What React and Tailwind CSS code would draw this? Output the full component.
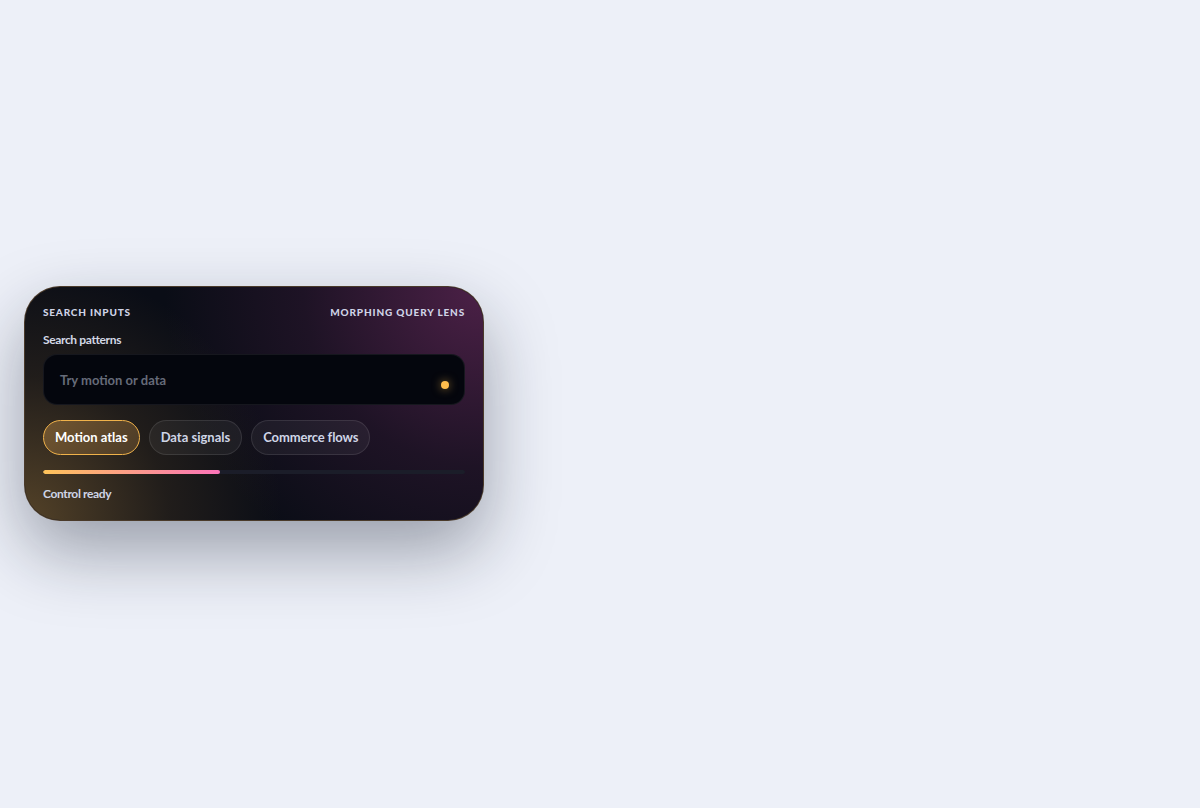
export default function App() {
  return (
    <div
      className="min-h-[808px] w-full bg-[#edf0f8] pt-[286px] pl-[24px]"
      style={{ fontFamily: "Lato, 'Noto Sans', sans-serif" }}
    >
      <div className="relative w-[460px] h-[235px] rounded-[36px] border border-[#5a4630]/80 overflow-hidden shadow-[0_30px_70px_rgba(15,23,42,0.38)] bg-[#0a0d16]">
        <div className="absolute inset-0 bg-[radial-gradient(circle_at_100%_0%,rgba(88,36,80,0.85),rgba(60,28,60,0.4)_35%,transparent_62%)]" />
        <div className="absolute inset-0 bg-[radial-gradient(circle_at_0%_100%,rgba(92,72,42,0.9),rgba(60,48,32,0.45)_28%,transparent_50%)]" />
        <div className="relative flex flex-col px-[18px] pt-[18px]">
          <div className="flex items-center justify-between h-[14px]">
            <span className="text-[10px] font-black tracking-[0.08em] text-[#cfd3e6]">SEARCH INPUTS</span>
            <span className="text-[10px] font-black tracking-[0.085em] text-[#cfd3e6]">MORPHING QUERY LENS</span>
          </div>
          <div className="mt-[13px] h-[16px] text-[12px] font-bold tracking-[-0.03em] text-[#d3d8e6] leading-[16px]">Search patterns</div>
          <div className="mt-[6px] h-[51px] rounded-[14px] bg-[#04060d] border border-white/[0.07] flex items-center justify-between pl-[16px] pr-[15px]">
            <span className="mt-[2px] text-[13px] font-bold text-[#666b79]">Try motion or data</span>
            <span className="mt-[10px] w-[8px] h-[8px] rounded-full bg-[#fdbc4c] shadow-[0_0_10px_rgba(253,188,76,0.6)]" />
          </div>
          <div className="mt-[15px] flex gap-[9px]">
            <div className="h-[35px] px-[11px] rounded-full border border-[#f0b24a] bg-[linear-gradient(135deg,rgba(120,90,50,0.9),rgba(80,62,40,0.9))] flex items-center text-[13px] font-bold text-white">Motion atlas</div>
            <div className="h-[35px] px-[11px] rounded-full border border-white/10 bg-white/[0.05] flex items-center text-[13px] font-bold text-[#cfd5e6]">Data signals</div>
            <div className="h-[35px] px-[11px] rounded-full border border-white/10 bg-white/[0.05] flex items-center text-[13px] font-bold tracking-[-0.01em] text-[#cfd5e6]">Commerce flows</div>
          </div>
          <div className="mt-[15px] h-[4px] rounded-full bg-[#1b1d29] overflow-hidden">
            <div className="h-full w-[42%] rounded-full bg-[linear-gradient(90deg,#fdc35a,#fb73b8)]" />
          </div>
          <div className="mt-[12px] h-[16px] text-[12px] font-bold tracking-[-0.03em] text-[#cfd5e6] leading-[16px]">Control ready</div>
        </div>
      </div>
    </div>
  );
}
